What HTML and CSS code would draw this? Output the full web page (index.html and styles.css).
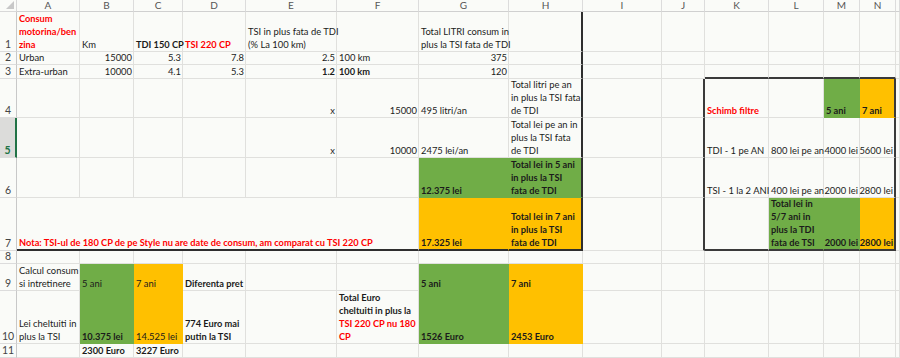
FILE: index.html
```html
<!DOCTYPE html>
<html>
<head>
<meta charset="utf-8">
<link rel="stylesheet" href="styles.css">
</head>
<body>
<div class="sheet">
  <!-- header row -->
  <div class="corner"><svg width="8" height="8" viewBox="0 0 8 8"><polygon points="8,0 8,8 0,8" fill="#c8c8c8"/></svg></div>
  <div class="ch">A</div><div class="ch">B</div><div class="ch">C</div><div class="ch">D</div><div class="ch">E</div><div class="ch">F</div><div class="ch">G</div><div class="ch">H</div><div class="ch">I</div><div class="ch">J</div><div class="ch">K</div><div class="ch">L</div><div class="ch">M</div><div class="ch">N</div><div class="ch"></div>

  <!-- row 1 -->
  <div class="rh">1</div>
  <div class="c b red">Consum<br>motorina/ben<br>zina</div>
  <div class="c">Km</div>
  <div class="c b">TDI 150 CP</div>
  <div class="c b red">TSI 220 CP</div>
  <div class="c">TSI in plus fata de TDI<br>(% La 100 km)</div>
  <div class="c"></div>
  <div class="c">Total LITRI consum in<br>plus la TSI fata de TDI</div>
  <div class="c tr"></div>
  <div class="c"></div><div class="c"></div><div class="c"></div><div class="c"></div><div class="c"></div><div class="c"></div><div class="c"></div>

  <!-- row 2 -->
  <div class="rh">2</div>
  <div class="c">Urban</div>
  <div class="c r">15000</div>
  <div class="c r">5.3</div>
  <div class="c r">7.8</div>
  <div class="c r">2.5</div>
  <div class="c">100 km</div>
  <div class="c r">375</div>
  <div class="c tr"></div>
  <div class="c"></div><div class="c"></div><div class="c"></div><div class="c"></div><div class="c"></div><div class="c"></div><div class="c"></div>

  <!-- row 3 -->
  <div class="rh">3</div>
  <div class="c">Extra-urban</div>
  <div class="c r">10000</div>
  <div class="c r">4.1</div>
  <div class="c r">5.3</div>
  <div class="c r b">1.2</div>
  <div class="c b">100 km</div>
  <div class="c r">120</div>
  <div class="c tr"></div>
  <div class="c"></div><div class="c"></div>
  <div class="c bxb"></div><div class="c bxb"></div><div class="c bxb"></div><div class="c bxb"></div>
  <div class="c"></div>

  <!-- row 4 -->
  <div class="rh">4</div>
  <div class="c"></div><div class="c"></div><div class="c"></div><div class="c"></div>
  <div class="c r">x</div>
  <div class="c r">15000</div>
  <div class="c">495 litri/an</div>
  <div class="c tr">Total litri pe an<br>in plus la TSI fata<br>de TDI</div>
  <div class="c"></div>
  <div class="c bxr"></div>
  <div class="c b red">Schimb filtre</div>
  <div class="c"></div>
  <div class="c b g">5 ani</div>
  <div class="c b o bxr">7 ani</div>
  <div class="c"></div>

  <!-- row 5 -->
  <div class="rh sel">5</div>
  <div class="c"></div><div class="c"></div><div class="c"></div><div class="c"></div>
  <div class="c r">x</div>
  <div class="c r">10000</div>
  <div class="c">2475 lei/an</div>
  <div class="c tr">Total lei pe an in<br>plus la TSI fata<br>de TDI</div>
  <div class="c"></div>
  <div class="c bxr"></div>
  <div class="c">TDI - 1 pe AN</div>
  <div class="c">800 lei pe an</div>
  <div class="c r">4000 lei</div>
  <div class="c r bxr">5600 lei</div>
  <div class="c"></div>

  <!-- row 6 -->
  <div class="rh">6</div>
  <div class="c"></div><div class="c"></div><div class="c"></div><div class="c"></div><div class="c"></div><div class="c"></div>
  <div class="c b g">12.375 lei</div>
  <div class="c b g tr">Total lei in 5 ani<br>in plus la TSI<br>fata de TDI</div>
  <div class="c"></div>
  <div class="c bxr"></div>
  <div class="c">TSI - 1 la 2 ANI</div>
  <div class="c">400 lei pe an</div>
  <div class="c r">2000 lei</div>
  <div class="c r bxr">2800 lei</div>
  <div class="c"></div>

  <!-- row 7 -->
  <div class="rh">7</div>
  <div class="c b red span6 tb">Nota: TSI-ul de 180 CP de pe Style nu are date de consum, am comparat cu TSI 220 CP</div>
  <div class="c b o tb">17.325 lei</div>
  <div class="c b o tr tb">Total lei in 7 ani<br>in plus la TSI<br>fata de TDI</div>
  <div class="c"></div>
  <div class="c bxr"></div>
  <div class="c bxb"></div>
  <div class="c b g bxb">Total lei in<br>5/7 ani in<br>plus la TDI<br>fata de TSI</div>
  <div class="c b g r bxb">2000 lei</div>
  <div class="c b o r bxb bxr">2800 lei</div>
  <div class="c"></div>

  <!-- row 8 -->
  <div class="rh">8</div>
  <div class="c"></div><div class="c"></div><div class="c"></div><div class="c"></div><div class="c"></div><div class="c"></div><div class="c"></div><div class="c"></div>
  <div class="c"></div><div class="c"></div><div class="c"></div><div class="c"></div><div class="c"></div><div class="c"></div><div class="c"></div>

  <!-- row 9 -->
  <div class="rh">9</div>
  <div class="c">Calcul consum<br>si intretinere</div>
  <div class="c g">5 ani</div>
  <div class="c o">7 ani</div>
  <div class="c b">Diferenta pret</div>
  <div class="c"></div>
  <div class="c"></div>
  <div class="c b g">5 ani</div>
  <div class="c b o">7 ani</div>
  <div class="c"></div><div class="c"></div><div class="c"></div><div class="c"></div><div class="c"></div><div class="c"></div><div class="c"></div>

  <!-- row 10 -->
  <div class="rh">10</div>
  <div class="c">Lei cheltuiti in<br>plus la TSI</div>
  <div class="c b g">10.375 lei</div>
  <div class="c o">14.525 lei</div>
  <div class="c b">774 Euro mai<br>putin la TSI</div>
  <div class="c"></div>
  <div class="c b"><div>Total Euro<br>cheltuiti in plus la<br><span class="red">TSI 220 CP nu 180<br>CP</span></div></div>
  <div class="c b g">1526 Euro</div>
  <div class="c b o">2453 Euro</div>
  <div class="c"></div><div class="c"></div><div class="c"></div><div class="c"></div><div class="c"></div><div class="c"></div><div class="c"></div>

  <!-- row 11 -->
  <div class="rh">11</div>
  <div class="c"></div>
  <div class="c b">2300 Euro</div>
  <div class="c b">3227 Euro</div>
  <div class="c"></div><div class="c"></div><div class="c"></div><div class="c"></div><div class="c"></div>
  <div class="c"></div><div class="c"></div><div class="c"></div><div class="c"></div><div class="c"></div><div class="c"></div><div class="c"></div>
</div>
</body>
</html>
```

FILE: styles.css
```css
html, body {
  margin: 0;
  padding: 0;
  background: #fafbf8;
  overflow: hidden;
}

.sheet {
  display: grid;
  grid-template-columns: 17px 63px 54px 49px 63px 91px 82px 90px 74px 79px 43px 64px 55px 36px 36px 4px;
  grid-template-rows: 12px 40px 13px 14px 39px 40px 40px 53px 13px 27px 53px 14px;
  font-family: Lato, "Liberation Sans", sans-serif;
  font-size: 9.4px;
  color: #1b1b1b;
}

.corner {
  border-right: 1px solid #d8d8d8;
  border-bottom: 1px solid #d8d8d8;
  display: flex;
  justify-content: flex-end;
  align-items: flex-end;
  padding: 0 2px 2px 0;
  box-sizing: border-box;
}

.ch {
  box-sizing: border-box;
  border-right: 1px solid #dcdcdc;
  border-bottom: 1px solid #d0d0d0;
  color: #555;
  text-align: center;
  line-height: 11px;
  font-size: 10px;
}

.rh {
  box-sizing: border-box;
  border-right: 1px solid #c8c8c8;
  border-bottom: 1px solid #dcdcdc;
  color: #444;
  display: flex;
  align-items: flex-end;
  justify-content: center;
  line-height: 13px;
  font-size: 10.5px;
}

.rh.sel {
  background: #dcdcda;
  border-right: 2px solid #217346;
  color: #217346;
  font-weight: bold;
}

.c {
  box-sizing: border-box;
  border-right: 1px solid #e0e0dd;
  border-bottom: 1px solid #e0e0dd;
  display: flex;
  align-items: flex-end;
  padding: 0 1px 0 2px;
  line-height: 13px;
  white-space: nowrap;
  min-width: 0;
}

.r { justify-content: flex-end; }
.b { font-weight: bold; font-size: 9.25px; }
.red { color: #ff0000; }

.g {
  background: #70ad47;
  border-right-color: #70ad47;
  border-bottom-color: #70ad47;
}

.o {
  background: #ffc000;
  border-right-color: #ffc000;
  border-bottom-color: #ffc000;
}

.span6 { grid-column: span 6; }

.tr { border-right: 2px solid #2e2e2e; }
.tb { border-bottom: 2px solid #2e2e2e; }

.bxb { border-bottom: 2px solid #3a3a3a; }
.bxr { border-right: 2px solid #3a3a3a; }
```
